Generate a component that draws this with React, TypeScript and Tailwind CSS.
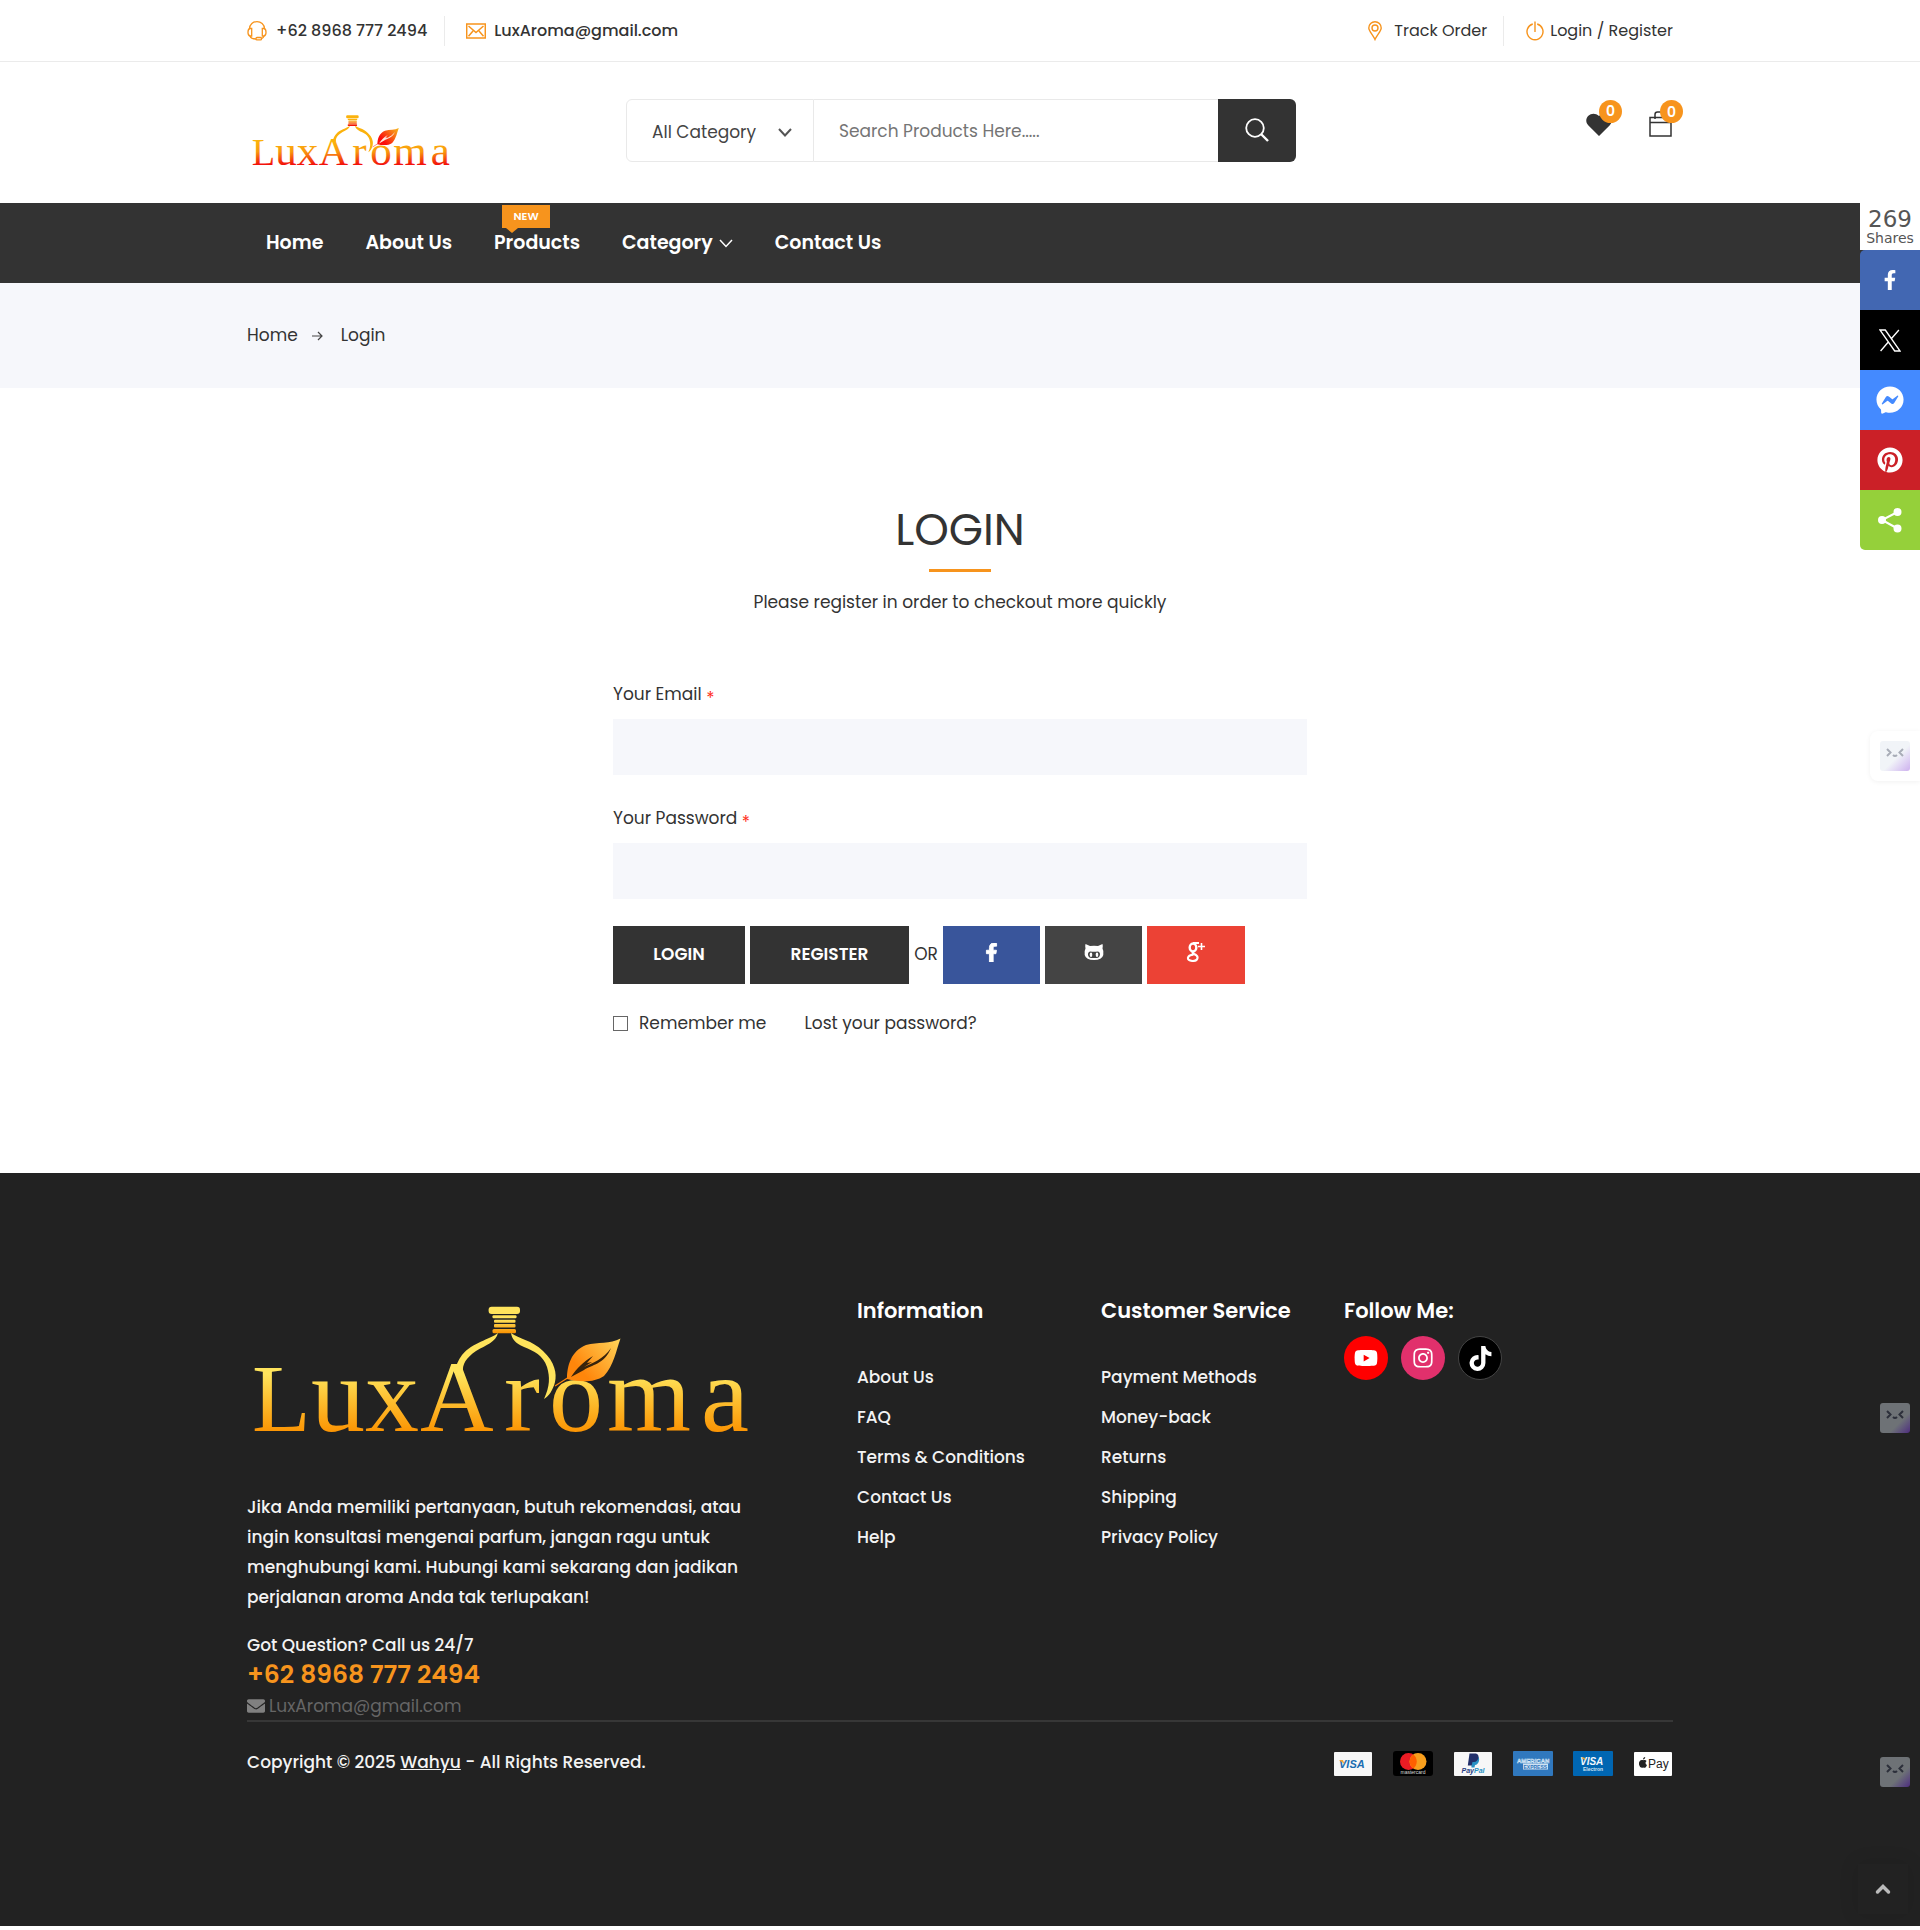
import { useId, type ReactNode } from "react";
import { FaEnvelope, FaFacebookF, FaFacebookMessenger, FaInstagram, FaPinterest, FaTiktok, FaYoutube } from "react-icons/fa";

type LogoProps = { className: string; top: string; middle: string; bottom: string; leafFrom: string; leafTo: string; vein: string };

function Logo({ className, top, middle, bottom, leafFrom, leafTo, vein }: LogoProps) {
  const id = useId();
  const letters = `${id}-letters`;
  const neck = `${id}-neck`;
  const leaf = `${id}-leaf`;
  return (
    <svg viewBox="10 26 504 150" className={className} role="img" aria-label="LuxAroma">
      <defs>
        <linearGradient id={letters} gradientUnits="userSpaceOnUse" x1="0" y1="84" x2="0" y2="152">
          <stop offset="0.15" stopColor={top} />
          <stop offset="0.5" stopColor={middle} />
          <stop offset="1" stopColor={bottom} />
        </linearGradient>
        <linearGradient id={neck} gradientUnits="userSpaceOnUse" x1="0" y1="26" x2="0" y2="53">
          <stop offset="0.5" stopColor={top} />
          <stop offset="1" stopColor={bottom} />
        </linearGradient>
        <linearGradient id={leaf} x1="0" y1="0.8" x2="1" y2="0.1">
          <stop offset="0.2" stopColor={leafFrom} />
          <stop offset="1" stopColor={leafTo} />
        </linearGradient>
      </defs>
      <g fill={`url(#${letters})`} fontFamily="'Liberation Serif', serif" fontSize="108">
        <text y="151" x="12 71 125">
          <tspan fontSize="96">L</tspan>ux
        </text>
        <text y="151" x="180" fontSize="102">A</text>
        <text y="151" x="264 309 367 461">roma</text>
      </g>
      <g fill={`url(#${neck})`}>
        <rect x="248.600" y="26.700" width="31.400" height="7.200" rx="3" />
        <rect x="252.500" y="35.300" width="24" height="3" rx="1" />
        <rect x="254" y="39.700" width="21.500" height="3" rx="1" />
        <rect x="254" y="44" width="21.500" height="3.500" rx="1" />
        <rect x="252.500" y="49" width="23.500" height="4.200" rx="1.500" />
      </g>
      <g fill={top}>
        <path d="M258 53 C249 60 233 62 222 75 C218 80 216 86 214 93 L223 93 C222 84 226 78 236 71 C246 65 256 62 258 53Z" />
        <path d="M271 53 C279 59 292 60 303 71 C315 82 317 94 315 102 C313 110 309 116 304 119 C310 106 310 97 307 87 C303 75 294 71 284 67 C275 63 272 59 271 53Z" />
      </g>
      <path d="M327 99 C327 86 331 71 346 65 C358 62 370 64 380.500 58.500 C376 71 374 85 364 96 C354 103 339 102 327 99Z" fill={`url(#${leaf})`} />
      <path d="M331 97 C337 88 343 82 353 76 L347 83 L352 82 L344 87 C352 83 364 79 371 68 C365 84 351 85 344 90 Z" fill={vein} />
      <path d="M329 97 L315 106" stroke={leafFrom} strokeWidth="1.200" />
    </svg>
  );
}

function Chevron({ className, width = 1.5 }: { className: string; width?: number }) {
  return (
    <svg viewBox="0 0 14 9" className={className} fill="none" stroke="currentColor" strokeWidth={width} aria-hidden="true">
      <path d="M1 1 L7 7.500 L13 1" />
    </svg>
  );
}

function HeadsetIcon() {
  return (
    <svg viewBox="0 0 20 20" className="h-5 w-5 text-[#f7941d]" fill="none" stroke="currentColor" strokeWidth="1.300" aria-hidden="true">
      <path d="M2.500 8 C2.500 -1.800 17.500 -1.800 17.500 8" />
      <path d="M4.700 7.500 H3 C0.300 8 0.300 14.500 3 15 H4.700Z M15.300 7.500 H17 C19.700 8 19.700 14.500 17 15 H15.300Z" />
      <path d="M3 15 C3.500 17 5.500 18 9 18 M17 15 C16.500 16.500 16 17.300 14.500 17.600" />
      <rect x="9" y="16.500" width="5.500" height="2.400" rx="1" />
    </svg>
  );
}

function MailIcon() {
  return (
    <svg viewBox="0 0 20 16" className="h-4 w-5 text-[#f7941d]" fill="none" stroke="currentColor" strokeWidth="1.500" aria-hidden="true">
      <rect x="0.700" y="1" width="18.600" height="14" />
      <path d="M2.500 3 L10 9.500 L17.500 3 M2.500 13.300 L7 8 M17.500 13.300 L13 8" />
    </svg>
  );
}

function PinIcon() {
  return (
    <svg viewBox="0 0 14 20" className="h-5 w-3.5 text-[#f7941d]" fill="none" stroke="currentColor" strokeWidth="1.400" aria-hidden="true">
      <path d="M7 18.500 C5 14 0.800 10 0.800 7 A6.200 6.200 0 0 1 13.200 7 C13.200 10 9 14 7 18.500Z" />
      <circle cx="7" cy="7" r="3" />
    </svg>
  );
}

function PowerIcon() {
  return (
    <svg viewBox="0 0 18 20" className="h-5 w-4.5 text-[#f7941d]" fill="none" stroke="currentColor" strokeWidth="1.400" aria-hidden="true">
      <path d="M6.800 3 A8 8 0 1 0 11.200 3 M9 0.500 V11" />
    </svg>
  );
}

function Face({ dark = false }: { dark?: boolean }) {
  return (
    <span
      className={
        dark
          ? "block h-[30px] w-[30px] rounded-[3px] bg-linear-135 from-[#6e7276] from-65% to-[#4f2a7e]"
          : "block h-[30px] w-[30px] rounded-[3px] bg-linear-135 from-[#f1f4f8] from-55% to-[#cdb0ee]"
      }
    >
      <svg viewBox="0 0 30 30" className={dark ? "h-full w-full text-[#2c2f3a]" : "h-full w-full text-[#a9adb8]"} fill="none" stroke="currentColor" strokeWidth="2" aria-hidden="true">
        <path d="M7 8 L10.500 11.500 L7 15 M23 8 L19.500 11.500 L23 15 M13 14 Q15 16 17 14" />
      </svg>
    </span>
  );
}

const shares: { label: string; className: string; icon: ReactNode }[] = [
  { label: "Share on Facebook", className: "rounded-tl-[5px] bg-[#4267b2]", icon: <FaFacebookF size={20} /> },
  {
    label: "Share on X",
    className: "bg-black",
    icon: (
      <svg viewBox="0 0 21 22" className="h-[23px] w-[22px]" fill="none" stroke="currentColor" strokeWidth="1.300">
        <path d="M1 1 H6 L20 21 H15Z M19 1 L11.500 9.500 M9.300 12 L1.500 21" />
      </svg>
    ),
  },
  { label: "Share on Messenger", className: "bg-[#448aff]", icon: <FaFacebookMessenger size={28} /> },
  { label: "Share on Pinterest", className: "bg-[#cb2027]", icon: <FaPinterest size={26} /> },
  {
    label: "More share options",
    className: "rounded-bl-[5px] bg-[#95d03a]",
    icon: (
      <svg viewBox="0 0 24 26" className="h-[26px] w-6" fill="currentColor" stroke="currentColor" strokeWidth="2">
        <path d="M19.500 5 L4 13 L19.500 21.500" fill="none" />
        <circle cx="19.500" cy="5" r="3" /><circle cx="4" cy="13" r="3" /><circle cx="19.500" cy="21.500" r="3" />
      </svg>
    ),
  },
];

function PaymentIcons() {
  return (
    <ul className="flex items-center gap-5 pt-1">
      <li>
        <svg viewBox="0 0 40 26" className="h-[26px] w-10" role="img" aria-label="Visa">
          <rect x="1" y="1" width="38" height="24" rx="1" fill="#f7f7f7" />
          <text x="6" y="17" fontFamily="'Liberation Sans', sans-serif" fontWeight="700" fontStyle="italic" fontSize="11" fill="#1a6cb0">VISA</text>
          <path d="M6 9 h4 l1.500 4Z" fill="#f2a832" />
        </svg>
      </li>
      <li>
        <svg viewBox="0 0 40 26" className="h-[26px] w-10" role="img" aria-label="Mastercard">
          <rect width="40" height="25" rx="3" fill="#000" />
          <circle cx="15.500" cy="10.500" r="8.500" fill="#eb1c24" />
          <circle cx="25" cy="10.500" r="8.500" fill="#f89f1d" />
          <path d="M20.200 3.600 A8.500 8.500 0 0 1 20.200 17.400 A8.500 8.500 0 0 1 20.200 3.600Z" fill="#ff5f00" />
          <text x="20" y="23" textAnchor="middle" fontFamily="'Liberation Sans', sans-serif" fontSize="5" fill="#ddd">mastercard</text>
        </svg>
      </li>
      <li>
        <svg viewBox="0 0 40 26" className="h-[26px] w-10" role="img" aria-label="PayPal">
          <rect x="1" y="1" width="38" height="24" rx="1" fill="#f7f7f7" />
          <path d="M18 5 H24 C28 6 26 14 22 14 L21.500 16.500 H18.500Z" fill="#2790c3" />
          <path d="M16.500 2.500 H23 C27.500 3.500 25.500 11 21 11 H19.500 L18.700 14.500 H14.800Z" fill="#22306b" />
          <text x="20" y="22" textAnchor="middle" fontFamily="'Liberation Sans', sans-serif" fontWeight="700" fontStyle="italic" fontSize="7" fill="#253b80">Pay<tspan fill="#2790c3">Pal</tspan></text>
        </svg>
      </li>
      <li>
        <svg viewBox="0 0 40 26" className="h-[26px] w-10" role="img" aria-label="American Express">
          <rect width="40" height="25" rx="1" fill="#3078be" />
          <text x="4" y="11.500" fontFamily="'Liberation Sans', sans-serif" fontWeight="700" fontSize="6" fill="none" stroke="#dceaf7" strokeWidth="0.500">AMERICAN</text>
          <rect x="10" y="12.500" width="25" height="6" fill="#cfe1f2" />
          <text x="10.500" y="17.500" fontFamily="'Liberation Sans', sans-serif" fontWeight="700" fontSize="5" fill="#3078be">EXPRESS</text>
        </svg>
      </li>
      <li>
        <svg viewBox="0 0 40 26" className="h-[26px] w-10" role="img" aria-label="Visa Electron">
          <rect width="40" height="25" rx="1" fill="#0066b2" />
          <text x="7" y="14" fontFamily="'Liberation Sans', sans-serif" fontWeight="700" fontStyle="italic" fontSize="10" fill="#f3f8fc">VISA</text>
          <path d="M8 6.500 h3.500 l1 3Z" fill="#f2a832" />
          <text x="10" y="20" fontFamily="'Liberation Sans', sans-serif" fontWeight="700" fontSize="5" fill="#d5e5f2">Electron</text>
        </svg>
      </li>
      <li>
        <svg viewBox="0 0 40 26" className="h-[26px] w-10" role="img" aria-label="Apple Pay">
          <rect x="1" y="1" width="38" height="24" rx="1" fill="#fff" />
          <path d="M10.200 9.300 C11.500 8.600 13 9 13.600 10 C12 11 12.200 13.300 14 14 C13 16.500 11.800 17.300 10.200 16.600 C8.200 17.500 6.600 16 6 13.500 C5.500 10 8 8.300 10.200 9.300Z M10 8.500 C10 7 11 6 12.200 5.900 C12.300 7.400 11.300 8.400 10 8.500Z" fill="#222" />
          <text x="15" y="16.500" fontFamily="'Liberation Sans', sans-serif" fontSize="12" fill="#222">Pay</text>
        </svg>
      </li>
    </ul>
  );
}

function FooterColumn({ title, links }: { title: string; links: string[] }) {
  return (
    <div>
      <h2 className="text-[21px] font-semibold leading-[30px] text-white">{title}</h2>
      <ul className="mt-[31px]">
        {links.map((link) => (
          <li key={link} className="leading-10"><a href="#">{link}</a></li>
        ))}
      </ul>
    </div>
  );
}

export default function App() {
  return (
    <div className="relative bg-white pb-[3px] font-['Poppins','Inter',sans-serif] text-[17px] text-[#333]">
      <div className="border-b border-[#ebebeb]">
        <div className="mx-auto flex h-[61px] max-w-[1426px] items-center justify-between text-base">
          <div className="flex items-center font-medium">
            <a href="tel:+6289687772494" className="flex items-center gap-[9px] border-r border-[#ebebeb] pr-[17px] leading-[30px]"><HeadsetIcon />+62 8968 777 2494</a>
            <a href="mailto:LuxAroma@gmail.com" className="flex items-center gap-2 pl-[21px] leading-[30px]"><MailIcon />LuxAroma@gmail.com</a>
          </div>
          <div className="flex items-center">
            <a href="#" className="flex items-center gap-3 border-r border-[#ebebeb] pr-4 leading-[30px]"><PinIcon />Track Order</a>
            <a href="#" className="flex items-center gap-1.5 pl-[22px] leading-[30px]"><PowerIcon />Login / Register</a>
          </div>
        </div>
      </div>

      <header className="mx-auto flex h-[141px] max-w-[1426px] items-center">
        <a href="#" className="w-[379px] pl-1">
          <Logo className="mt-6 block h-[60px] w-[201px]" top="#fbb20c" middle="#f9970f" bottom="#f20a0a" leafFrom="#fb0d0d" leafTo="#f7b21a" vein="#ffe9e0" />
        </a>
        <form className="mb-1 flex h-[63px] w-[670px]" onSubmit={(e) => e.preventDefault()}>
          <div className="relative flex w-[188px] items-center rounded-l-md border border-[#e9e9e9]">
            <select aria-label="Category" className="h-full w-full appearance-none bg-transparent pl-[25px] pt-1 text-[#444] outline-none">
              <option>All Category</option>
            </select>
            <Chevron width={2} className="pointer-events-none absolute right-[21px] mt-1 h-[9px] w-3.5 text-[#555]" />
          </div>
          <input type="search" aria-label="Search products" placeholder="Search Products Here....." className="min-w-0 flex-1 border-y border-[#e9e9e9] px-[25px] pt-0.5 outline-none placeholder:text-[#757575]" />
          <button type="submit" aria-label="Search" className="flex w-[78px] items-center justify-center rounded-r-md bg-[#333] pb-0.5 text-white">
            <svg viewBox="0 0 24 24" className="h-6 w-6" fill="none" stroke="currentColor" strokeWidth="1.800" aria-hidden="true">
              <circle cx="10" cy="10" r="8.800" /><path d="M16 16 L23 23" strokeWidth="2.400" />
            </svg>
          </button>
        </form>
        <div className="ml-auto flex items-center gap-[37px] pb-[17px] pr-px">
          <a href="#" aria-label="Wishlist" className="relative">
            <svg viewBox="0 0 26 23" className="h-[23px] w-[26px]" fill="#333" aria-hidden="true"><path d="M13 23 L2.200 12.300 C-4 5 6 -3.500 13 3 C20 -3.500 30 5 23.800 12.300Z" /></svg>
            <span className="absolute -right-2.5 -top-[13px] flex h-[23px] w-[23px] items-center justify-center rounded-full bg-[#f7941d] text-sm font-semibold leading-none text-white">0</span>
          </a>
          <a href="#" aria-label="Cart" className="relative">
            <svg viewBox="0 0 23 26" className="h-[26px] w-[23px]" fill="none" stroke="#333" strokeWidth="1.500" aria-hidden="true"><path d="M1 6.500 H22 V25 H1Z M1 11.500 H22 M6 8 V3.500 Q6 1 8.500 1 H14.500 Q17 1 17 3.500 V8" /></svg>
            <span className="absolute -right-[11px] -top-[11px] flex h-[23px] w-[23px] items-center justify-center rounded-full bg-[#f7941d] text-sm font-semibold leading-none text-white">0</span>
          </a>
        </div>
      </header>

      <nav className="bg-[#333] text-[19px] font-semibold text-white">
        <ul className="mx-auto flex h-20 max-w-[1426px] items-center gap-[42px] px-[19px]">
          <li><a href="#">Home</a></li>
          <li><a href="#">About Us</a></li>
          <li className="relative">
            <a href="#">Products</a>
            <span className="absolute -top-6 left-2 flex h-[23px] w-12 items-center justify-center bg-[#f7941d] text-[11px] font-semibold">NEW</span>
            <span className="absolute -top-px left-3 border-x-[6px] border-t-[5px] border-x-transparent border-t-[#f7941d]" />
          </li>
          <li><a href="#" className="flex items-center gap-1.5">Category<Chevron className="h-[9px] w-3.5" /></a></li>
          <li><a href="#">Contact Us</a></li>
        </ul>
      </nav>

      <div className="bg-[#f6f7fb]">
        <nav aria-label="Breadcrumb" className="mx-auto flex h-[105px] max-w-[1426px] items-center">
          <a href="#">Home</a>
          <svg viewBox="0 0 11 10" className="ml-3.5 mr-[18px] h-2.5 w-[11px]" fill="none" stroke="#444" strokeWidth="1.200" aria-hidden="true"><path d="M0 5 H10 M6 1 L10 5 L6 9" /></svg>
          <a href="#">Login</a>
        </nav>
      </div>

      <main className="mx-auto max-w-[694px] pb-[135px] pt-[114px]">
        <div className="flex flex-col items-center">
          <h1 className="text-[44px] leading-[56px]">LOGIN</h1>
          <span className="mt-[11px] h-[3px] w-[62px] bg-[#f7941d]" />
          <p className="mt-[15px] leading-[30px]">Please register in order to checkout more quickly</p>
        </div>
        <form className="mt-[62px]" onSubmit={(e) => e.preventDefault()}>
          <label htmlFor="email" className="block leading-[30px]">Your Email <span className="align-sub leading-none text-[#ff2c18]">*</span></label>
          <input id="email" type="email" className="mt-2.5 block h-14 w-full bg-[#f6f7fb] px-5 outline-none" />
          <label htmlFor="password" className="mt-7 block leading-[30px]">Your Password <span className="align-sub leading-none text-[#ff2c18]">*</span></label>
          <input id="password" type="password" className="mt-2.5 block h-14 w-full bg-[#f6f7fb] px-5 outline-none" />
          <div className="mt-[27px] flex items-center gap-[5px]">
            <button type="submit" className="h-[58px] w-[132px] bg-[#333] font-semibold text-white">LOGIN</button>
            <button type="button" className="h-[58px] w-[159px] bg-[#333] font-semibold text-white">REGISTER</button>
            <span className="w-6 text-center">OR</span>
            <button type="button" aria-label="Log in with Facebook" className="flex h-[58px] w-[97px] items-center justify-center bg-[#39559b] pb-1.5 text-white"><FaFacebookF size={19} stroke="currentColor" strokeWidth={24} /></button>
            <button type="button" aria-label="Log in with GitHub" className="flex h-[58px] w-[97px] items-center justify-center bg-[#444] pb-1.5 text-white">
              <svg viewBox="0 0 20 18" className="h-[18px] w-5" fill="currentColor" aria-hidden="true">
                <path fillRule="evenodd" d="M1.500 1 L6 3 Q10 2.300 14 3 L18.500 1 Q19.200 3.500 18.500 5.500 Q20 8 19.300 12 Q18 17 10 17 Q2 17 0.700 12 Q0 8 1.500 5.500 Q0.800 3.500 1.500 1Z M6.500 8.500 C3 8.500 3 14.800 7.500 15 H12.500 C17 14.800 17 8.500 13.500 8.500 Q10 9.200 6.500 8.500Z" />
                <ellipse cx="7" cy="11.700" rx="1.300" ry="2.200" /><ellipse cx="13" cy="11.700" rx="1.300" ry="2.200" />
              </svg>
            </button>
            <button type="button" aria-label="Log in with Google Plus" className="flex h-[58px] w-[98px] items-center justify-center bg-[#ec4235] pb-1.5 text-white">
              <svg viewBox="0 0 20 20" className="h-5 w-5" fill="none" stroke="currentColor" aria-hidden="true">
                <ellipse cx="7" cy="5.500" rx="3.300" ry="4" strokeWidth="2.400" />
                <path d="M7 1 H13 M8 9.500 Q5 11 8 12 Q12 13.500 11.500 16 Q11 19 6.500 19 Q1.500 18.500 2 15.800 Q2.500 13 7.500 12.600" strokeWidth="2.100" />
                <path d="M15.500 1 V8 M12 4.500 H19" strokeWidth="1.600" />
              </svg>
            </button>
          </div>
          <div className="mt-6 flex items-center leading-[30px]">
            <input id="remember" type="checkbox" className="h-[15px] w-[15px] appearance-none border border-[#666] bg-white checked:bg-[#f7941d]" />
            <label htmlFor="remember" className="ml-[11px]">Remember me</label>
            <a href="#" className="ml-[38px]">Lost your password?</a>
          </div>
        </form>
      </main>

      <footer className="bg-[#222] pb-[149px] pt-[123px] font-medium text-[#f3f3f3]">
        <div className="mx-auto max-w-[1426px]">
          <div className="grid grid-cols-[610fr_244fr_243fr_329fr] border-b-2 border-[#373737]">
            <div>
              <Logo className="ml-[3px] mt-2.5 block h-[150px] w-[504px]" top="#ffe45c" middle="#fdc233" bottom="#fb9403" leafFrom="#ff860b" leafTo="#ffd257" vein="#38230c" />
              <p className="mt-9 leading-[30px]">
                Jika Anda memiliki pertanyaan, butuh rekomendasi, atau<br />
                ingin konsultasi mengenai parfum, jangan ragu untuk<br />
                menghubungi kami. Hubungi kami sekarang dan jadikan<br />
                perjalanan aroma Anda tak terlupakan!
              </p>
              <p className="mt-[18px] leading-[30px]">Got Question? Call us 24/7</p>
              <a href="tel:+6289687772494" className="block text-[25px] font-semibold leading-[30px] text-[#f7941d]">+62 8968 777 2494</a>
              <a href="mailto:LuxAroma@gmail.com" className="flex items-center gap-1 pt-0.5 font-normal leading-7 text-[#666]"><FaEnvelope size={18} className="text-[#808080]" />LuxAroma@gmail.com</a>
            </div>
            <FooterColumn title="Information" links={["About Us", "FAQ", "Terms & Conditions", "Contact Us", "Help"]} />
            <FooterColumn title="Customer Service" links={["Payment Methods", "Money-back", "Returns", "Shipping", "Privacy Policy"]} />
            <div>
              <h2 className="text-[21px] font-semibold leading-[30px] text-white">Follow Me:</h2>
              <div className="mt-2.5 flex gap-[13px] text-white">
                <a href="#" aria-label="YouTube" className="flex h-11 w-11 items-center justify-center rounded-full bg-[#f00]"><FaYoutube size={24} /></a>
                <a href="#" aria-label="Instagram" className="flex h-11 w-11 items-center justify-center rounded-full bg-[#e1306c]"><FaInstagram size={22} /></a>
                <a href="#" aria-label="TikTok" className="flex h-11 w-11 items-center justify-center rounded-full border border-[#444] bg-black"><FaTiktok size={25} /></a>
              </div>
            </div>
          </div>
          <div className="mt-[25px] flex items-center justify-between">
            <p className="leading-[30px]">Copyright © 2025 <a href="#" className="underline">Wahyu</a> - All Rights Reserved.</p>
            <PaymentIcons />
          </div>
        </div>
      </footer>

      <aside aria-label="Share" className="absolute right-0 top-[203px] w-[60px]">
        <div className="flex h-[47px] flex-col items-center bg-white pt-1 font-['DejaVu_Sans',sans-serif] text-[#555]">
          <span className="text-[23px] leading-6">269</span>
          <span className="text-sm leading-[14px]">Shares</span>
        </div>
        {shares.map((share) => (
          <button key={share.label} type="button" aria-label={share.label} className={`flex h-[60px] w-full items-center justify-center text-white ${share.className}`}>{share.icon}</button>
        ))}
      </aside>
      <button type="button" aria-label="Open assistant" className="absolute right-0 top-[731px] rounded-l-lg bg-white p-2.5 shadow-[0_1px_5px_rgba(0,0,0,0.06)]"><Face /></button>
      <button type="button" aria-label="Open assistant" className="absolute right-2.5 top-[1403px]"><Face dark /></button>
      <button type="button" aria-label="Open assistant" className="absolute right-2.5 top-[1757px]"><Face dark /></button>
      <button type="button" aria-label="Back to top" className="absolute bottom-[15px] right-3 flex h-[50px] w-[50px] items-center justify-center bg-[#222] shadow-[0_0_20px_rgba(0,0,0,0.12)]">
        <svg viewBox="0 0 16 12" className="h-3 w-4" fill="none" stroke="#bbb" strokeWidth="3.500" strokeLinecap="round" aria-hidden="true"><path d="M2.500 9 L8 3.500 L13.500 9" /></svg>
      </button>
    </div>
  );
}
